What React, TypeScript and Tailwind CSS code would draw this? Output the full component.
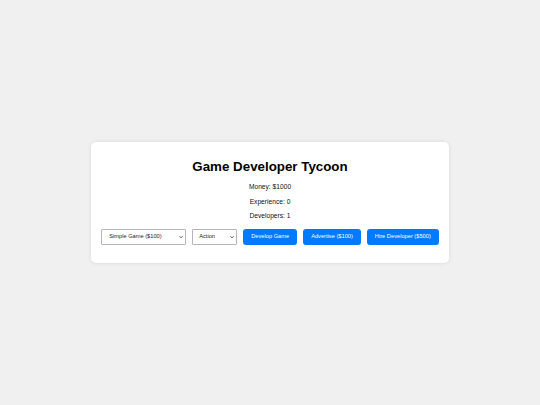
import { useState } from "react";

const gameTypes = [
  { value: "simple", label: "Simple Game ($100)" },
  { value: "medium", label: "Medium Game ($500)" },
  { value: "complex", label: "Complex Game ($1000)" },
];

const genres = ["Action", "Adventure", "Puzzle", "Strategy"];

function Chevron() {
  return (
    <svg
      viewBox="0 0 8 5"
      className="pointer-events-none absolute right-[3px] top-1/2 -translate-y-1/2 w-[4px] h-[3px]"
    >
      <path d="M1 1l3 3 3-3" fill="none" stroke="#222" strokeWidth="1.6" />
    </svg>
  );
}

export default function App() {
  const [money] = useState(1000);
  const [experience] = useState(0);
  const [developers] = useState(1);
  const [gameType, setGameType] = useState("simple");
  const [genre, setGenre] = useState("Action");

  const btn =
    "block h-[16px] px-[8px] rounded-[3px] bg-[#007bff] text-white text-[5.7px] leading-none whitespace-nowrap";
  const sel =
    "block appearance-none w-full h-[16px] leading-none border border-[#b5b5b5] rounded-[1px] bg-white text-[5.7px] text-[#222] outline-none";

  return (
    <div
      className="w-full h-[405px] bg-[#f0f0f0] flex items-center justify-center"
      style={{ fontFamily: '"Liberation Sans", Arial, sans-serif' }}
    >
      <div className="w-fit bg-white rounded-[5px] shadow-[0_0_4px_rgba(0,0,0,0.1)] px-[10px] pt-[17px] pb-[18px] flex flex-col items-center text-black">
        <h1 className="text-[13.33px] leading-[16px] font-bold">Game Developer Tycoon</h1>
        <p className="mt-[8px] text-[6.67px] leading-[8px] text-[#111]">Money: ${money}</p>
        <p className="mt-[6.5px] text-[6.67px] leading-[8px] text-[#111]">Experience: {experience}</p>
        <p className="mt-[6.5px] text-[6.67px] leading-[8px] text-[#111]">Developers: {developers}</p>
        <div className="mt-[9px] flex items-center gap-[6px]">
          <div className="relative w-[85px] h-[16px]">
            <select
              value={gameType}
              onChange={(e) => setGameType(e.target.value)}
              className={`${sel} pl-[7px]`}
            >
              {gameTypes.map((g) => (
                <option key={g.value} value={g.value}>
                  {g.label}
                </option>
              ))}
            </select>
            <Chevron />
          </div>
          <div className="relative w-[45px] h-[16px]">
            <select
              value={genre}
              onChange={(e) => setGenre(e.target.value)}
              className={`${sel} pl-[6px]`}
            >
              {genres.map((g) => (
                <option key={g} value={g}>
                  {g}
                </option>
              ))}
            </select>
            <Chevron />
          </div>
          <button className={btn}>Develop Game</button>
          <button className={btn}>Advertise ($100)</button>
          <button className={btn}>Hire Developer ($500)</button>
        </div>
      </div>
    </div>
  );
}
